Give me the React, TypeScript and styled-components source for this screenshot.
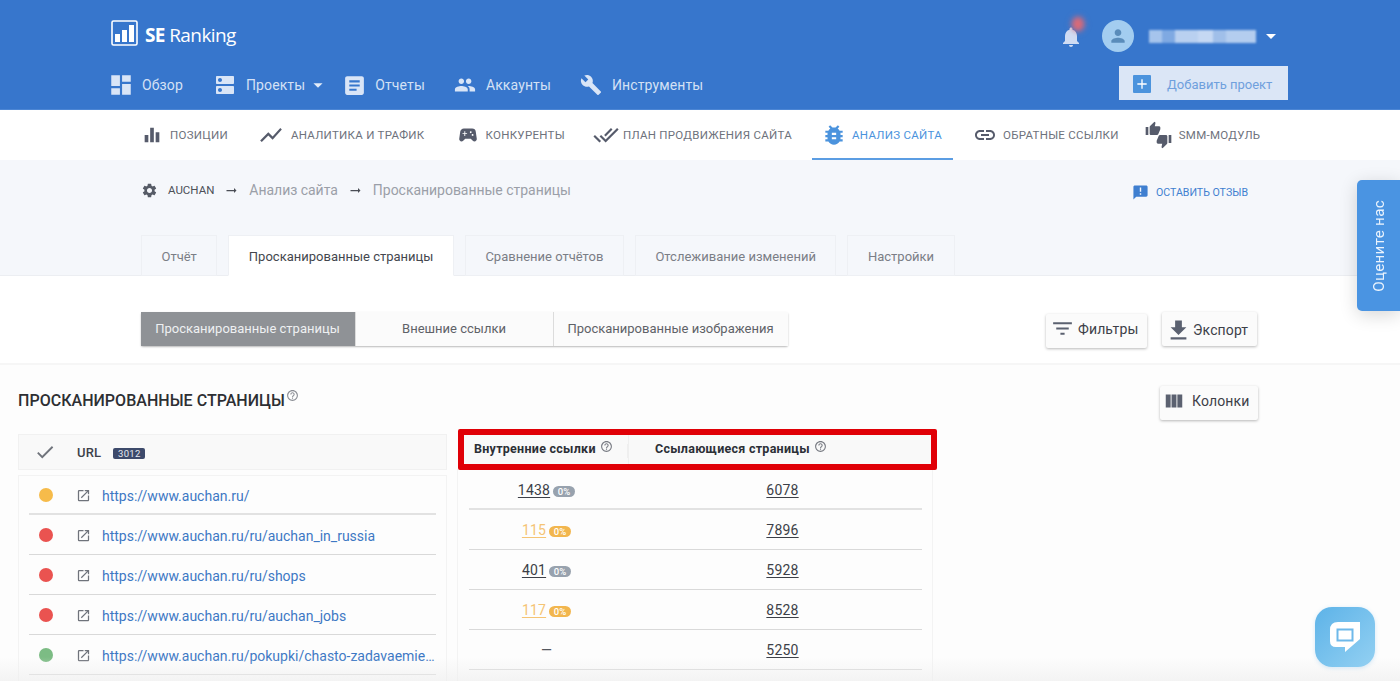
import React from "react";
import styled, { createGlobalStyle } from "styled-components";
import {
  MdDashboard, MdDns, MdArticle, MdPeople, MdBuild, MdEqualizer, MdShowChart, MdSportsEsports,
  MdDoneAll, MdBugReport, MdLink, MdThumbUp, MdThumbDown, MdSettings, MdArrowRightAlt, MdAnnouncement,
  MdFilterList, MdFileDownload, MdViewColumn, MdHelpOutline, MdOpenInNew, MdCheck, MdNotifications, MdPerson,
  MdAdd, MdArrowDropDown,
} from "react-icons/md";

const Global = createGlobalStyle`
  html, body { margin: 0; padding: 0; background: #fff; }
  body { font-family: Roboto, "Noto Sans", sans-serif; }
  * { box-sizing: border-box; }
`;

const Page = styled.div`
  position: relative; width: 1400px; height: 681px; overflow: hidden; background: #fdfdfd; color: #333;
`;
const Header = styled.header`
  height: 110px; background: #3776cc; border-bottom: 1px solid #4c86d4; padding: 20px 112px 0 111px;
  display: flex; flex-direction: column;
`;
const TopRow = styled.div`display: flex; align-items: center; justify-content: space-between; height: 32px;`;
const Logo = styled.div`display: flex; align-items: center; gap: 7px; color: #fff; svg { margin-bottom: 6px; }`;
const LogoText = styled.span`
  font-family: "Open Sans", sans-serif; font-size: 19px; letter-spacing: -0.6px; line-height: 28px; margin-bottom: 2px;
  b { font-weight: 700; }
`;
const UserBox = styled.div`display: flex; align-items: center; padding-right: 14px; color: #fff;`;
const BellWrap = styled.div`position: relative; width: 24px; height: 26px; margin-right: 19px; color: #cfdcf3; display: flex; align-items: flex-end; justify-content: center;`;
const Glow = styled.span`
  position: absolute; right: -1px; top: -6px; width: 12px; height: 14px; border-radius: 50%;
  background: #d96a78; filter: blur(2.5px); box-shadow: 0 0 5px rgba(217,106,120,.6);
`;
const Avatar = styled.div`
  width: 32px; height: 32px; border-radius: 50%; background: #a3cdf0; color: #5a8cba;
  display: flex; align-items: center; justify-content: center; margin-right: 15px;
`;
const BlurName = styled.div`
  width: 107px; height: 13px; filter: blur(1px);
  background: linear-gradient(90deg, #a6c4ec 0 12%, #7fa9e2 12% 24%, #b9d0f0 24% 46%, #c5d8f3 46% 60%, #a0bfe9 60% 72%, #b4cdef 72% 100%);
`;
const Caret = styled.span`display: flex; color: #fff; margin-left: 3px; margin-right: -9px;`;
const MainNavRow = styled.div`display: flex; align-items: flex-start; justify-content: space-between; margin-top: 14px;`;
const MainNav = styled.nav`display: flex; align-items: center; height: 38px;`;
const MainItem = styled.a<{ $ml: number; $s: number }>`
  display: flex; align-items: center; gap: 11px; margin-left: ${(p) => p.$ml}px; color: #d4e1f5;
  font-size: 14px; letter-spacing: 0.12px; white-space: nowrap;
  svg { color: #d9e5f7; flex: none; margin: 0 ${(p) => (20 - p.$s) / 2}px; }
`;
const NavCaret = styled.span`display: flex; margin-left: 2px; margin-right: -16px; color: #e3ecf9;`;
const AddButton = styled.button`
  width: 169px; height: 34px; border: 0; background: #dbe6f6; padding: 2px 0 0 14px;
  display: flex; align-items: center; gap: 16px; color: #6fa0dd; font: 400 13px Roboto, sans-serif; letter-spacing: 0;
`;
const PlusBox = styled.span`
  width: 18px; height: 18px; background: #4b93dd; color: #fff; display: flex; align-items: center; justify-content: center; border-radius: 1px;
`;
const SubNav = styled.nav`height: 50px; background: #fff; display: flex; align-items: stretch; padding-left: 129px;`;
const SubItem = styled.a<{ $active?: boolean; $mr: number; $gap: number; $pl: number }>`
  display: flex; align-items: center; gap: ${(p) => p.$gap}px; padding: 1px 11px 0 ${(p) => p.$pl}px; margin-right: ${(p) => p.$mr}px;
  font-size: 11.5px; letter-spacing: 0.28px; text-transform: uppercase; white-space: nowrap;
  color: ${(p) => (p.$active ? "#4b93dd" : "#6e727c")};
  border-bottom: 2px solid ${(p) => (p.$active ? "#5b9de3" : "transparent")};
  svg { color: ${(p) => (p.$active ? "#4b93dd" : "#565b6b")}; flex: none; }
`;
const Thumbs = styled.span`
  position: relative; width: 25px; height: 26px; display: block;
  svg { position: absolute; }
  svg:first-child { left: -1px; top: -1px; }
  svg:last-child { right: -1px; bottom: -1px; }
`;
const Band = styled.section`height: 116px; background: #f5f7fb; border-bottom: 1px solid #eceef2; padding: 0 152px 0 141px; display: flex; flex-direction: column; justify-content: space-between;`;
const CrumbRow = styled.div`display: flex; align-items: center; justify-content: space-between; height: 20px; margin-top: 20px;`;
const Crumbs = styled.div`display: flex; align-items: center; color: #9b9fa8; font-size: 14px; letter-spacing: -0.03px;`;
const CrumbRoot = styled.span`font-size: 11.5px; color: #4d5058; margin-left: 10px; letter-spacing: 0;`;
const CrumbArrow = styled.span`display: flex; color: #4a4d55; margin: 0 10px;`;
const GearIcon = styled.span`display: flex; color: #565b66;`;
const Feedback = styled.a`display: flex; align-items: center; gap: 7px; color: #3f7fd0; font-size: 10.6px; margin-right: 0; margin-top: 4px;`;
const Tabs = styled.div`display: flex; gap: 11px; margin-bottom: -1px;`;
const Tab = styled.div<{ $active?: boolean }>`
  height: 41px; padding: 1px 19.5px 0; display: flex; align-items: center; font-size: 13px; white-space: nowrap;
  background: ${(p) => (p.$active ? "#fff" : "#f5f7fb")}; color: ${(p) => (p.$active ? "#44474e" : "#7b7e86")};
  border: 1px solid #eef0f4; border-bottom: ${(p) => (p.$active ? "1px solid #fff" : "1px solid #eef0f4")};
`;
const Toolbar = styled.div`
  height: 89px; background: #fff; border-bottom: 2px solid #f6f6f6; padding: 36px 143px 0 141px;
  display: flex; align-items: flex-start; justify-content: space-between;
`;
const Segments = styled.div`display: flex; box-shadow: 0 1px 2px rgba(0,0,0,.28); border-radius: 2px;`;
const Segment = styled.div<{ $active?: boolean; $w: number }>`
  width: ${(p) => p.$w}px; height: 34px; display: flex; align-items: center; justify-content: center; font-size: 13px; padding: 0 1px 1px 0;
  background: ${(p) => (p.$active ? "#8f9296" : "#fbfbfb")}; color: ${(p) => (p.$active ? "#eef0f2" : "#5f6268")};
  & + & { border-left: 1px solid #dcdcdc; }
`;
const ToolButtons = styled.div`display: flex; gap: 15px; align-items: flex-start;`;
const ToolButton = styled.button<{ $w: number; $mt?: number; $pl: number; $gap: number; $pb?: number; $pt?: number }>`
  width: ${(p) => p.$w}px; height: 34px; margin-top: ${(p) => p.$mt ?? 0}px; border: 0; border-radius: 2px; background: #fbfbfb;
  box-shadow: 0 1px 3px rgba(0,0,0,.28); display: flex; align-items: center; justify-content: flex-start; gap: ${(p) => p.$gap}px;
  color: #3d4048; font: 400 14px Roboto, sans-serif; letter-spacing: 0.12px;
  padding: ${(p) => p.$pt ?? 0}px 0 ${(p) => p.$pb ?? 0}px ${(p) => p.$pl}px;
  svg { color: #5b6170; flex: none; }
`;
const Content = styled.div`padding: 21px 142px 0 18px;`;
const TitleRow = styled.div`display: flex; justify-content: space-between; align-items: flex-start; height: 47px;`;
const Title = styled.h2`
  margin: 5px 0 0; font-size: 16px; font-weight: 500; letter-spacing: 0.03px; color: #2d2f33; text-transform: uppercase; display: flex; align-items: flex-start; line-height: 19px;
  svg { color: #8a8d94; margin: -2px 0 0 1px; }
`;
const Tables = styled.div`display: flex; align-items: flex-start; gap: 10px;`;
const LeftTable = styled.div`width: 429px; margin-top: 1px;`;
const LeftHead = styled.div`
  height: 36px; background: #f9f9f9; border: 1px solid #f1f1f1; display: flex; align-items: center; padding-left: 15px; font-size: 13px; font-weight: 500; color: #3e414a;
  svg { color: #70747c; }
`;
const UrlLabel = styled.span`margin-left: 21px; letter-spacing: 0.2px;`;
const CountBadge = styled.span`
  margin-left: 12px; width: 32px; height: 11px; border-radius: 2px; background: #3d4a6b; color: #e7eaf2; font-size: 9.5px; font-weight: 400; text-align: center; line-height: 11px; letter-spacing: 0.3px; margin-top: 2px;
`;
const LeftCard = styled.div`margin-top: 5px; border: 1px solid #f3f3f3; padding: 0 10px; background: #fdfdfd; height: 260px;`;
const LeftRow = styled.div`
  height: 40px; padding-top: 2px; border-bottom: 1px solid #d9d9d9; display: flex; align-items: center; &:first-child { height: 39px; border-bottom-width: 2px; border-bottom-color: #e2e2e2; }
`;
const Dot = styled.span<{ $c: string }>`width: 14px; height: 14px; border-radius: 50%; background: ${(p) => p.$c}; margin-left: 10px; margin-top: -1px; flex: none;`;
const OpenIcon = styled.span`display: flex; color: #6f737b; margin-left: 23px; margin-right: 11px;`;
const UrlLink = styled.a`color: #3d78c4; font-size: 14px; letter-spacing: 0; white-space: nowrap;`;
const RightTable = styled.div`width: 476px;`;
const RightHead = styled.div`
  height: 36px; background: #f9f9f9; display: grid; grid-template-columns: 170px 1fr; align-items: center; font-size: 12.5px; font-weight: 700; color: #2c2f36; margin-left: 1px; letter-spacing: 0.27px;
`;
const HeadCell = styled.div<{ $pl: number }>`
  padding-left: ${(p) => p.$pl}px; display: flex; align-items: center; gap: 4px; height: 100%; padding-bottom: 6px;
  svg { color: #777a82; margin-top: -3px; }
  & + & { border-left: 1px solid #efefef; box-shadow: -12px 0 0 -11px #efefef; }
`;
const RightCard = styled.div`border: 1px solid #f3f3f3; border-top: 0; padding: 2px 10px 0 11px; height: 266px;`;
const RightRow = styled.div`
  height: 40px; display: grid; grid-template-columns: 155px 1fr; align-items: center; border-bottom: 1px solid #d9d9d9;
  &:first-child { height: 39px; border-bottom-width: 2px; border-bottom-color: #e2e2e2; }
`;
const NumCell = styled.div<{ $pl?: number }>`display: flex; align-items: center; justify-content: center; gap: 3px; padding: 1px 0 0 ${(p) => p.$pl ?? 0}px; font-size: 14px; letter-spacing: 0.2px;`;
const Num = styled.a<{ $warn?: boolean }>`text-decoration: underline; text-underline-offset: 2px; color: ${(p) => (p.$warn ? "#f5c474" : "#3c3f47")};`;
const Pct = styled.span<{ $warn?: boolean }>`
  width: 22px; height: 11px; border-radius: 6px; background: ${(p) => (p.$warn ? "#f2b64e" : "#98a2ae")}; color: #fff; font-size: 9.5px; text-align: center; line-height: 11px; font-weight: 500; margin-top: 2px;
`;
const Dash = styled.span`color: #55585f;`;
const RedFrame = styled.div`
  position: absolute; left: 458px; top: 429px; width: 479px; height: 41px; border: 6px solid #e00007; border-radius: 2px; pointer-events: none;
`;
const RateTab = styled.div`
  position: absolute; right: 0; top: 180px; width: 43px; height: 131px; background: #4a94e2; border-radius: 5px 0 0 5px; color: #eaf3fd;
  box-shadow: 0 4px 18px rgba(0,0,0,.16); display: flex; align-items: center; justify-content: center; font-size: 15.2px; letter-spacing: 0.3px;
  span { writing-mode: vertical-rl; transform: rotate(180deg); white-space: nowrap; }
`;
const ChatButton = styled.div`
  position: absolute; left: 1315px; top: 607px; width: 60px; height: 60px; border-radius: 17px;
  background: linear-gradient(135deg, #5db3e8, #93d0f2); display: flex; align-items: center; justify-content: center;
  box-shadow: 0 1px 4px rgba(90,170,230,.25); z-index: 2;
`;
const BottomFade = styled.div`
  position: absolute; left: 0; right: 0; bottom: 0; height: 24px; pointer-events: none;
  background: linear-gradient(180deg, rgba(240,240,240,0), rgba(238,238,238,.65));
`;

const LogoMark = () => (
  <svg width="27" height="26" viewBox="0 0 27 26" fill="none">
    <rect x="1" y="1" width="25" height="24" rx="1.5" stroke="#fff" strokeWidth="1.6" />
    <rect x="4" y="14" width="5" height="8" fill="#fff" />
    <rect x="11" y="10" width="5" height="12" fill="#fff" />
    <rect x="18" y="5" width="5" height="17" fill="#fff" />
  </svg>
);
const ChatIcon = () => (
  <svg width="30" height="30" viewBox="0 0 30 30">
    <path d="M8 0H30V17L15 30V25H6Q0 25 0 19V8Q0 0 8 0Z" fill="#fff" />
    <rect x="7.5" y="7.5" width="15" height="11" fill="none" stroke="#6eb9ea" strokeWidth="2" />
  </svg>
);

const mainItems = [
  { t: "Обзор", I: MdDashboard, ml: 0, s: 26 },
  { t: "Проекты", I: MdDns, ml: 32, s: 24, caret: true },
  { t: "Отчеты", I: MdArticle, ml: 31, s: 25 },
  { t: "Аккаунты", I: MdPeople, ml: 30, s: 22 },
  { t: "Инструменты", I: MdBuild, ml: 30, s: 22 },
];
const subItems = [
  { t: "Позиции", icon: <MdEqualizer size={22} />, mr: 7, gap: 7, pl: 12 },
  { t: "Аналитика и трафик", icon: <MdShowChart size={26} />, mr: 9, gap: 7, pl: 12 },
  { t: "Конкуренты", icon: <MdSportsEsports size={22} />, mr: 5, gap: 7, pl: 12 },
  { t: "План продвижения сайта", icon: <MdDoneAll size={26} />, mr: 9, gap: 4, pl: 12 },
  { t: "Анализ сайта", icon: <MdBugReport size={26} />, mr: 8, gap: 5, active: true, pl: 9 },
  { t: "Обратные ссылки", icon: <MdLink size={24} />, mr: 4, gap: 6, pl: 12 },
  {
    t: "SMM-модуль",
    icon: (
      <Thumbs>
        <MdThumbUp size={16} />
        <MdThumbDown size={16} />
      </Thumbs>
    ),
    mr: 0,
    gap: 8,
    pl: 12,
  },
];
const rows = [
  { c: "#f6bb4a", u: "https://www.auchan.ru/", a: "1438", w: false, b: "6078" },
  { c: "#ea5350", u: "https://www.auchan.ru/ru/auchan_in_russia", a: "115", w: true, b: "7896" },
  { c: "#ea5350", u: "https://www.auchan.ru/ru/shops", a: "401", w: false, b: "5928" },
  { c: "#ea5350", u: "https://www.auchan.ru/ru/auchan_jobs", a: "117", w: true, b: "8528" },
  { c: "#7cbc84", u: "https://www.auchan.ru/pokupki/chasto-zadavaemie…", a: "", w: false, b: "5250" },
];

export default function App() {
  return (
    <Page>
      <Global />
      <Header>
        <TopRow>
          <Logo>
            <LogoMark />
            <LogoText><b>SE</b> Ranking</LogoText>
          </Logo>
          <UserBox>
            <BellWrap>
              <Glow />
              <MdNotifications size={24} />
            </BellWrap>
            <Avatar><MdPerson size={20} /></Avatar>
            <BlurName />
            <Caret><MdArrowDropDown size={24} /></Caret>
          </UserBox>
        </TopRow>
        <MainNavRow>
          <MainNav>
            {mainItems.map(({ t, I, ml, s, caret }) => (
              <React.Fragment key={t}>
                <MainItem $ml={ml} $s={s}><I size={s} />{t}</MainItem>
                {caret && <NavCaret><MdArrowDropDown size={22} /></NavCaret>}
              </React.Fragment>
            ))}
          </MainNav>
          <AddButton>
            <PlusBox><MdAdd size={16} /></PlusBox>
            Добавить проект
          </AddButton>
        </MainNavRow>
      </Header>
      <SubNav>
        {subItems.map((s) => (
          <SubItem key={s.t} $active={s.active} $mr={s.mr} $gap={s.gap} $pl={s.pl}>
            {s.icon}
            {s.t}
          </SubItem>
        ))}
      </SubNav>
      <Band>
        <CrumbRow>
          <Crumbs>
            <GearIcon><MdSettings size={17} /></GearIcon>
            <CrumbRoot>AUCHAN</CrumbRoot>
            <CrumbArrow><MdArrowRightAlt size={15} /></CrumbArrow>
            Анализ сайта
            <CrumbArrow><MdArrowRightAlt size={15} /></CrumbArrow>
            Просканированные страницы
          </Crumbs>
          <Feedback><MdAnnouncement size={17} />ОСТАВИТЬ ОТЗЫВ</Feedback>
        </CrumbRow>
        <Tabs>
          <Tab>Отчёт</Tab>
          <Tab $active>Просканированные страницы</Tab>
          <Tab>Сравнение отчётов</Tab>
          <Tab>Отслеживание изменений</Tab>
          <Tab>Настройки</Tab>
        </Tabs>
      </Band>
      <Toolbar>
        <Segments>
          <Segment $active $w={214}>Просканированные страницы</Segment>
          <Segment $w={198}>Внешние ссылки</Segment>
          <Segment $w={235}>Просканированные изображения</Segment>
        </Segments>
        <ToolButtons>
          <ToolButton $w={101} $mt={2} $pl={4} $gap={3} $pb={5}><MdFilterList size={25} />Фильтры</ToolButton>
          <ToolButton $w={95} $pl={3} $gap={1} $pt={2}><MdFileDownload size={27} />Экспорт</ToolButton>
        </ToolButtons>
      </Toolbar>
      <Content>
        <TitleRow>
          <Title>Просканированные страницы<MdHelpOutline size={13} /></Title>
          <ToolButton $w={98} $pl={3} $gap={7} $pb={4}><MdViewColumn size={22} />Колонки</ToolButton>
        </TitleRow>
        <Tables>
          <LeftTable>
            <LeftHead>
              <MdCheck size={22} />
              <UrlLabel>URL</UrlLabel>
              <CountBadge>3012</CountBadge>
            </LeftHead>
            <LeftCard>
              {rows.map((r) => (
                <LeftRow key={r.u}>
                  <Dot $c={r.c} />
                  <OpenIcon><MdOpenInNew size={15} /></OpenIcon>
                  <UrlLink>{r.u}</UrlLink>
                </LeftRow>
              ))}
            </LeftCard>
          </LeftTable>
          <RightTable>
            <RightHead>
              <HeadCell $pl={16}>Внутренние ссылки<MdHelpOutline size={13} /></HeadCell>
              <HeadCell $pl={26}>Ссылающиеся страницы<MdHelpOutline size={13} /></HeadCell>
            </RightHead>
            <RightCard>
              {rows.map((r) => (
                <RightRow key={r.b}>
                  <NumCell>
                    {r.a ? (
                      <>
                        <Num $warn={r.w}>{r.a}</Num>
                        <Pct $warn={r.w}>0%</Pct>
                      </>
                    ) : (
                      <Dash>—</Dash>
                    )}
                  </NumCell>
                  <NumCell $pl={19}><Num>{r.b}</Num></NumCell>
                </RightRow>
              ))}
            </RightCard>
          </RightTable>
        </Tables>
      </Content>
      <RedFrame />
      <RateTab><span>Оцените нас</span></RateTab>
      <BottomFade />
      <ChatButton><ChatIcon /></ChatButton>
    </Page>
  );
}
